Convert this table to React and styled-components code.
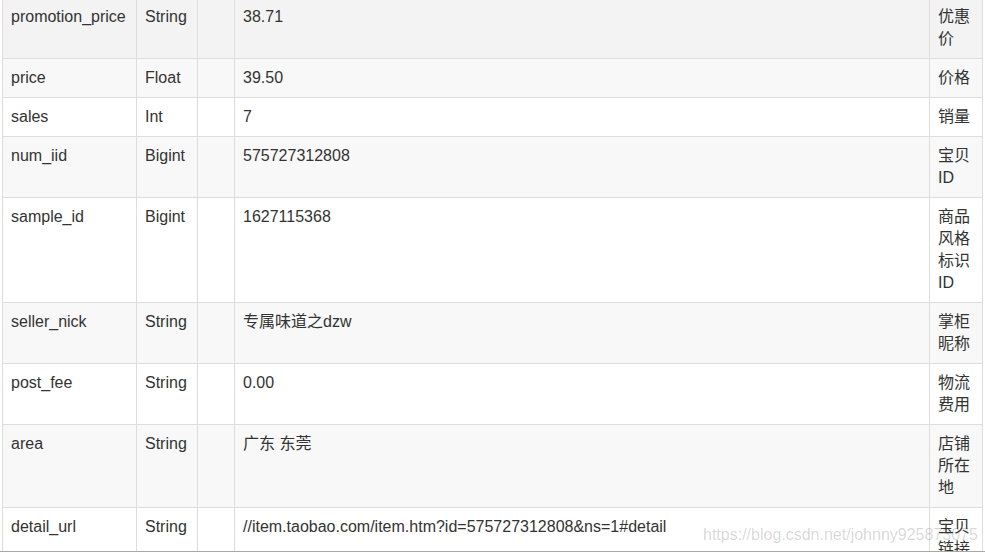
import React from 'react'
import styled, { createGlobalStyle } from 'styled-components'

const rows = [
  { name: 'promotion_price', type: 'String', value: '38.71', desc: '优惠价', tone: 'hover' },
  { name: 'price', type: 'Float', value: '39.50', desc: '价格', tone: 'stripe' },
  { name: 'sales', type: 'Int', value: '7', desc: '销量' },
  { name: 'num_iid', type: 'Bigint', value: '575727312808', desc: '宝贝ID', tone: 'stripe' },
  { name: 'sample_id', type: 'Bigint', value: '1627115368', desc: '商品风格标识ID' },
  { name: 'seller_nick', type: 'String', value: '专属味道之dzw', desc: '掌柜昵称', tone: 'stripe' },
  { name: 'post_fee', type: 'String', value: '0.00', desc: '物流费用' },
  { name: 'area', type: 'String', value: '广东 东莞', desc: '店铺所在地', tone: 'stripe' },
  { name: 'detail_url', type: 'String', value: '//item.taobao.com/item.htm?id=575727312808&ns=1#detail', desc: '宝贝链接' },
]

const App = () => (
  <>
    <GlobalStyle />
    <Frame>
      <Table>
        {rows.map((row) => (
          <Row key={row.name} $tone={row.tone}>
            <Cell>{row.name}</Cell>
            <Cell>{row.type}</Cell>
            <Cell />
            <Cell>{row.value}</Cell>
            <Cell>{row.desc}</Cell>
          </Row>
        ))}
      </Table>
      <Watermark>https://blog.csdn.net/johnny925873075</Watermark>
    </Frame>
  </>
)

const GlobalStyle = createGlobalStyle`
  body {
    margin: 0;
    background: #fff;
    font-family: "Liberation Sans", Arial, "Noto Sans CJK SC", sans-serif;
  }
`

const Frame = styled.div`
  position: relative;
  height: 551px;
  overflow: hidden;
  border-bottom: 1px solid #a8a8a8;
  padding-left: 2px;
`

const Table = styled.div`
  width: 980px;
  margin-top: -2px;
  border-left: 1px solid #ddd;
  font-size: 16px;
  line-height: 22px;
  color: #333;
`

const toneColors = {
  hover: '#f3f3f3',
  stripe: '#f8f8f8',
}

const Row = styled.div`
  display: grid;
  grid-template-columns: 134px 61px 37px 695px 53px;
  border-bottom: 1px solid #ddd;
  background: ${(p) => toneColors[p.$tone] || '#fff'};
`

const Cell = styled.div`
  box-sizing: border-box;
  padding: 8px;
  border-right: 1px solid #ddd;
  word-break: break-all;
`

const Watermark = styled.div`
  position: absolute;
  left: 703px;
  top: 524px;
  font-size: 16px;
  line-height: 22px;
  color: rgba(0, 0, 0, 0.17);
  white-space: nowrap;
  pointer-events: none;
`

export default App
